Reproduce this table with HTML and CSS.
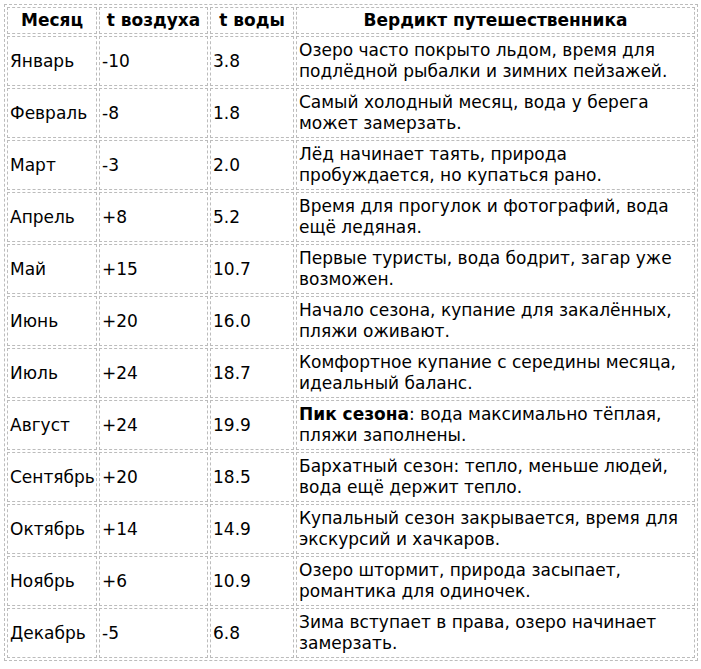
FILE: index.html
```html
<!DOCTYPE html>
<html lang="ru">
<head>
<meta charset="utf-8">
<link rel="stylesheet" href="styles.css">
</head>
<body>
<table class="climate">
  <thead>
    <tr>
      <th class="c-month">Месяц</th>
      <th class="c-air">t воздуха</th>
      <th class="c-water">t воды</th>
      <th class="c-verdict">Вердикт путешественника</th>
    </tr>
  </thead>
  <tbody>
    <tr><td>Январь</td><td>-10</td><td>3.8</td><td>Озеро часто покрыто льдом, время для<br>подлёдной рыбалки и зимних пейзажей.</td></tr>
    <tr><td>Февраль</td><td>-8</td><td>1.8</td><td>Самый холодный месяц, вода у берега<br>может замерзать.</td></tr>
    <tr><td>Март</td><td>-3</td><td>2.0</td><td>Лёд начинает таять, природа<br>пробуждается, но купаться рано.</td></tr>
    <tr><td>Апрель</td><td>+8</td><td>5.2</td><td>Время для прогулок и фотографий, вода<br>ещё ледяная.</td></tr>
    <tr><td>Май</td><td>+15</td><td>10.7</td><td>Первые туристы, вода бодрит, загар уже<br>возможен.</td></tr>
    <tr><td>Июнь</td><td>+20</td><td>16.0</td><td>Начало сезона, купание для закалённых,<br>пляжи оживают.</td></tr>
    <tr><td>Июль</td><td>+24</td><td>18.7</td><td>Комфортное купание с середины месяца,<br>идеальный баланс.</td></tr>
    <tr><td>Август</td><td>+24</td><td>19.9</td><td><strong>Пик сезона</strong>: вода максимально тёплая,<br>пляжи заполнены.</td></tr>
    <tr><td>Сентябрь</td><td>+20</td><td>18.5</td><td>Бархатный сезон: тепло, меньше людей,<br>вода ещё держит тепло.</td></tr>
    <tr><td>Октябрь</td><td>+14</td><td>14.9</td><td>Купальный сезон закрывается, время для<br>экскурсий и хачкаров.</td></tr>
    <tr><td>Ноябрь</td><td>+6</td><td>10.9</td><td>Озеро штормит, природа засыпает,<br>романтика для одиночек.</td></tr>
    <tr><td>Декабрь</td><td>-5</td><td>6.8</td><td>Зима вступает в права, озеро начинает<br>замерзать.</td></tr>
  </tbody>
</table>
</body>
</html>
```

FILE: styles.css
```css
html, body {
  margin: 0;
  padding: 0;
  background: #fff;
}
body {
  padding: 4px;
  font-family: "DejaVu Sans", Verdana, sans-serif;
  font-size: 17px;
  color: #000;
}
.climate {
  table-layout: fixed;
  width: 694px;
  border: 1px dashed #bcbcbc;
  border-spacing: 2px;
  border-collapse: separate;
}
.climate th,
.climate td {
  box-sizing: border-box;
  border: 1px dashed #bcbcbc;
  padding: 1px 2px;
  line-height: 21px;
  vertical-align: middle;
  white-space: nowrap;
  overflow: hidden;
}
.climate th {
  font-weight: bold;
  text-align: center;
  height: 27px;
}
.climate td {
  text-align: left;
  height: 50px;
}
.c-month { width: 90px; }
.c-air { width: 109px; }
.c-water { width: 84px; }
.c-verdict { width: 399px; }
```
